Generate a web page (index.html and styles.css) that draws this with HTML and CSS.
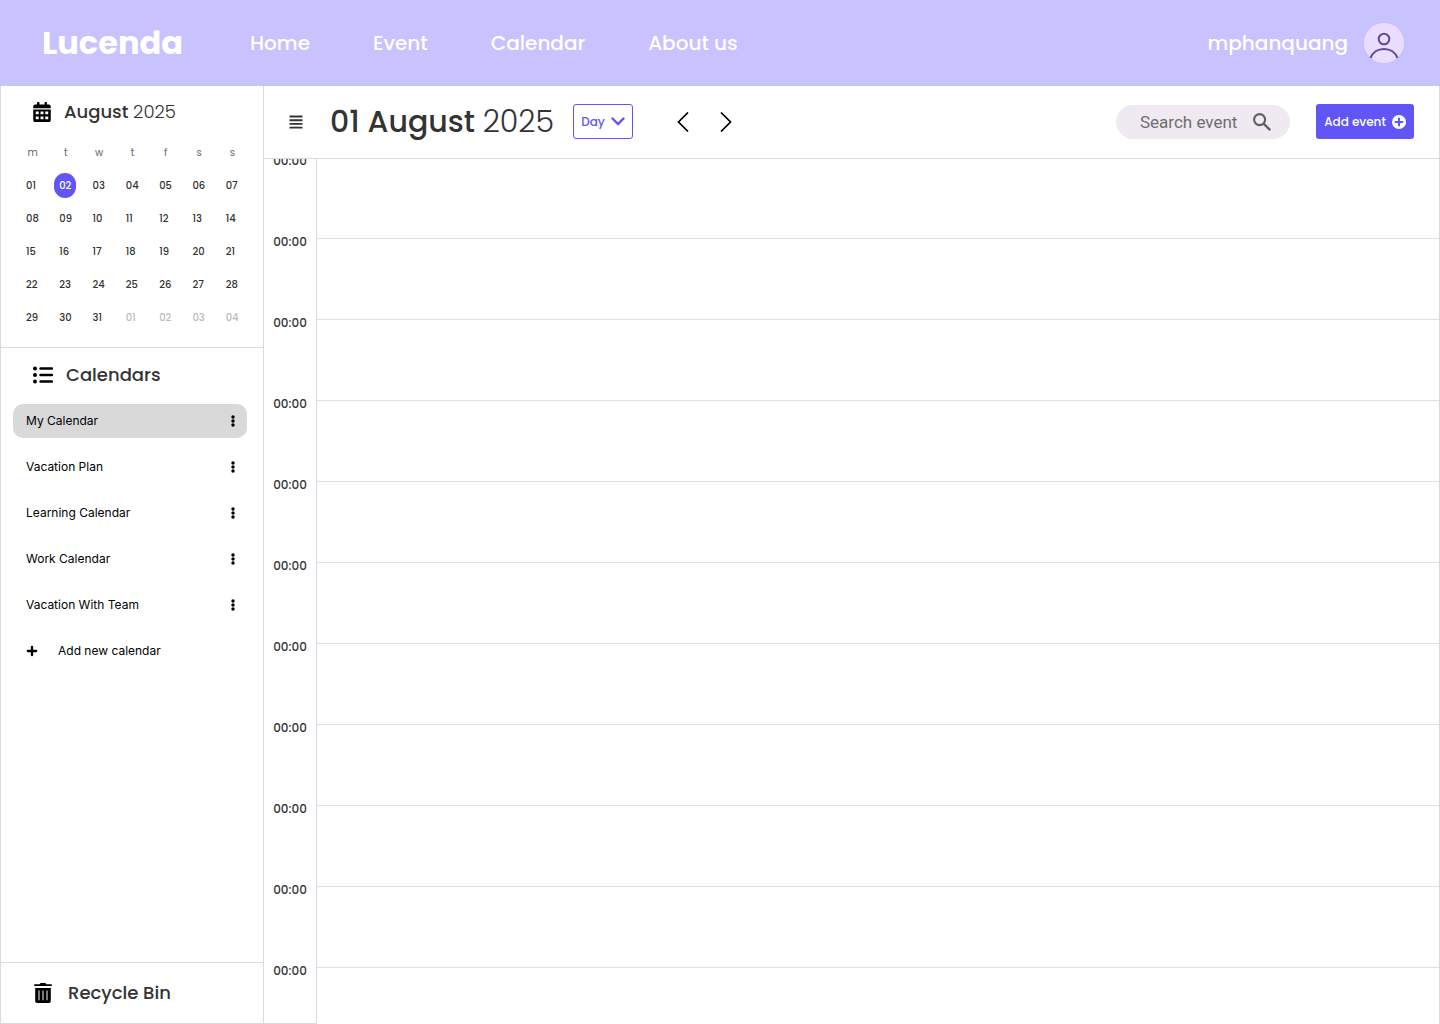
FILE: index.html
```html
<!DOCTYPE html>
<html lang="en">
<head>
<meta charset="utf-8">
<meta name="viewport" content="width=device-width, initial-scale=1">
<title>Lucenda</title>
<link rel="stylesheet" href="styles.css">
</head>
<body>
<header class="topbar">
  <a class="logo" href="#">Lucenda</a>
  <nav class="nav">
    <a href="#">Home</a>
    <a href="#">Event</a>
    <a href="#">Calendar</a>
    <a href="#">About us</a>
  </nav>
  <a class="user" href="#">
    <span>mphanquang</span>
    <svg width="40" height="40" viewBox="0 0 40 40" aria-hidden="true">
      <circle cx="20" cy="20" r="20" fill="#eaddff"/>
      <g fill="none" stroke="#5b4b96" stroke-width="2">
        <circle cx="20" cy="16" r="5.3"/>
        <path d="M6.600 35C8.500 29.500 13.700 26 20 26s11.500 3.500 13.400 9"/>
      </g>
    </svg>
  </a>
</header>
<div class="layout">
  <aside class="sidebar">
    <section class="month">
      <h2 class="side-title">
        <svg width="18" height="20" viewBox="0 0 448 512" aria-hidden="true"><path d="M0 192h448v272c0 26.500-21.500 48-48 48H48c-26.500 0-48-21.500-48-48zM400 64h-48V16c0-8.800-7.200-16-16-16h-32c-8.800 0-16 7.200-16 16v48H160V16c0-8.800-7.200-16-16-16h-32c-8.800 0-16 7.200-16 16v48H48C21.500 64 0 85.500 0 112v48h448v-48c0-26.500-21.500-48-48-48z"/><path fill="#fff" d="M64 244h76v70H64zm122 0h76v70h-76zm122 0h76v70h-76zM64 370h76v70H64zm122 0h76v70h-76zm122 0h76v70h-76z"/></svg>
        <span>August <span class="year">2025</span></span>
      </h2>
      <table class="days">
        <thead><tr><th>m</th><th>t</th><th>w</th><th>t</th><th>f</th><th>s</th><th>s</th></tr></thead>
        <tbody>
          <tr><td>01</td><td><span class="today">02</span></td><td>03</td><td>04</td><td>05</td><td>06</td><td>07</td></tr>
          <tr><td>08</td><td>09</td><td>10</td><td>11</td><td>12</td><td>13</td><td>14</td></tr>
          <tr><td>15</td><td>16</td><td>17</td><td>18</td><td>19</td><td>20</td><td>21</td></tr>
          <tr><td>22</td><td>23</td><td>24</td><td>25</td><td>26</td><td>27</td><td>28</td></tr>
          <tr><td>29</td><td>30</td><td>31</td><td class="next">01</td><td class="next">02</td><td class="next">03</td><td class="next">04</td></tr>
        </tbody>
      </table>
    </section>
    <section class="calendars">
      <h2 class="side-title">
        <svg width="20" height="18" viewBox="0 0 20 18" aria-hidden="true"><circle cx="2" cy="2.500" r="2"/><circle cx="2" cy="9" r="2"/><circle cx="2" cy="15.500" r="2"/><path d="M7.500 2.500h11.500M7.500 9h11.500M7.500 15.500h11.500" stroke="#000" stroke-width="2.500" stroke-linecap="round"/></svg>
        <span>Calendars</span>
      </h2>
      <ul class="cal-list">
        <li class="cal active"><a href="#">My Calendar</a><button type="button" aria-label="Options for My Calendar"><svg width="4" height="12" viewBox="0 0 4 12"><circle cx="2" cy="2" r="1.700"/><circle cx="2" cy="6" r="1.700"/><circle cx="2" cy="10" r="1.700"/></svg></button></li>
        <li class="cal"><a href="#">Vacation Plan</a><button type="button" aria-label="Options for Vacation Plan"><svg width="4" height="12" viewBox="0 0 4 12"><circle cx="2" cy="2" r="1.700"/><circle cx="2" cy="6" r="1.700"/><circle cx="2" cy="10" r="1.700"/></svg></button></li>
        <li class="cal"><a href="#">Learning Calendar</a><button type="button" aria-label="Options for Learning Calendar"><svg width="4" height="12" viewBox="0 0 4 12"><circle cx="2" cy="2" r="1.700"/><circle cx="2" cy="6" r="1.700"/><circle cx="2" cy="10" r="1.700"/></svg></button></li>
        <li class="cal"><a href="#">Work Calendar</a><button type="button" aria-label="Options for Work Calendar"><svg width="4" height="12" viewBox="0 0 4 12"><circle cx="2" cy="2" r="1.700"/><circle cx="2" cy="6" r="1.700"/><circle cx="2" cy="10" r="1.700"/></svg></button></li>
        <li class="cal"><a href="#">Vacation With Team</a><button type="button" aria-label="Options for Vacation With Team"><svg width="4" height="12" viewBox="0 0 4 12"><circle cx="2" cy="2" r="1.700"/><circle cx="2" cy="6" r="1.700"/><circle cx="2" cy="10" r="1.700"/></svg></button></li>
      </ul>
      <button type="button" class="add-calendar">
        <svg width="12" height="12" viewBox="0 0 12 12" aria-hidden="true"><path d="M6 1.800v8.400M1.800 6h8.400" stroke="#000" stroke-width="2.300" stroke-linecap="round"/></svg>
        Add new calendar
      </button>
    </section>
    <a class="side-title recycle" href="#">
      <svg width="18" height="20" viewBox="0 0 18 20" aria-hidden="true"><path d="M1 1.200h4.700L6.500 0h5l.8 1.200H17c.6 0 1 .4 1 .9s-.4 1-1 1H1c-.6 0-1-.4-1-1s.4-.9 1-.9zM1.200 5h15.600v13c0 1.200-.8 2-2 2H3.200c-1.200 0-2-.8-2-2z"/><path d="M5 7.500v9.800M9 7.500v9.800M13 7.500v9.800" stroke="#ddd" stroke-width="1.100"/></svg>
      <span>Recycle Bin</span>
    </a>
  </aside>
  <main class="main">
    <div class="toolbar">
      <button type="button" class="icon-btn" aria-label="Toggle sidebar"><svg width="14" height="14" viewBox="0 0 14 14"><path d="M.5 1.500h13M.5 5.200h13M.5 8.900h13M.5 12.600h13" stroke="#333" stroke-width="1.900"/></svg></button>
      <h1 class="date">01 August <span class="year">2025</span></h1>
      <button type="button" class="view">Day <svg width="14" height="9" viewBox="0 0 14 9" aria-hidden="true"><path d="M1.500 1.500 7 7l5.500-5.500" fill="none" stroke="#6155f5" stroke-width="2.400" stroke-linecap="round"/></svg></button>
      <div class="pager">
        <button type="button" class="icon-btn" aria-label="Previous day"><svg width="12" height="20" viewBox="0 0 12 20"><path d="M11 .5 1.500 10l9.500 9.500" fill="none" stroke="#000" stroke-width="1.700"/></svg></button>
        <button type="button" class="icon-btn" aria-label="Next day"><svg width="12" height="20" viewBox="0 0 12 20"><path d="M1 .5 10.500 10 1 19.500" fill="none" stroke="#000" stroke-width="1.700"/></svg></button>
      </div>
      <form class="search">
        <input type="search" placeholder="Search event" aria-label="Search event">
        <button type="submit" class="icon-btn" aria-label="Search"><svg width="18" height="18" viewBox="0 0 18 18"><circle cx="6.600" cy="6.600" r="5.500" fill="none" stroke="#605d64" stroke-width="2.100"/><path d="m10.600 10.600 6.600 6.600" stroke="#605d64" stroke-width="2.300"/></svg></button>
      </form>
      <button type="button" class="add-event">Add event <svg width="14" height="14" viewBox="0 0 14 14" aria-hidden="true"><circle cx="7" cy="7" r="7" fill="#fff"/><path d="M7 3.500v7M3.500 7h7" stroke="#6155f5" stroke-width="2" stroke-linecap="round"/></svg></button>
    </div>
    <div class="timeline">
      <ol class="hours">
        <li>00:00</li><li>00:00</li><li>00:00</li><li>00:00</li><li>00:00</li><li>00:00</li><li>00:00</li><li>00:00</li><li>00:00</li><li>00:00</li><li>00:00</li>
      </ol>
      <div class="slots">
        <div></div><div></div><div></div><div></div><div></div><div></div><div></div><div></div><div></div><div></div><div></div>
      </div>
    </div>
  </main>
</div>
</body>
</html>
```

FILE: styles.css
```css
* { box-sizing: border-box; }

body {
  margin: 0;
  height: 100vh;
  display: flex;
  flex-direction: column;
  background: #fff;
  color: #333;
  font-family: Poppins, Inter, sans-serif;
  font-weight: 500;
}

a { color: inherit; text-decoration: none; }
ul, ol { list-style: none; margin: 0; padding: 0; }
h1, h2 { margin: 0; font-weight: 500; }
svg { display: block; flex: none; }

button {
  border: 0;
  padding: 0;
  background: none;
  color: inherit;
  font: inherit;
  cursor: pointer;
}

.topbar {
  flex: none;
  height: 86px;
  padding: 0 36px 0 42px;
  display: flex;
  align-items: center;
  background: #c8c2ff;
  color: #fff;
  font-size: 20px;
}

.logo { width: 208px; font-size: 32px; font-weight: 700; }
.nav { display: flex; gap: 63px; }
.user { margin-left: auto; display: flex; align-items: center; gap: 16px; }

.layout { flex: 1; min-height: 0; display: flex; }

.sidebar {
  flex: none;
  width: 264px;
  display: flex;
  flex-direction: column;
  border: 1px solid #d9d9de;
  border-top: 0;
}

.side-title {
  display: flex;
  align-items: center;
  gap: 13px;
  padding-left: 32px;
  font-size: 18px;
  line-height: 28px;
}

.year { font-weight: 300; }

.month { padding: 12px 0 13px; border-bottom: 1px solid #d9d9de; }

.days {
  width: 233px;
  margin: 10px 0 0 21px;
  table-layout: fixed;
  border-collapse: collapse;
  font-size: 10px;
  line-height: 25px;
}

.days th, .days td { height: 33px; padding: 0 0 0 4px; text-align: left; }
.days th { padding: 0 12px 0 0; text-align: center; font-weight: 400; color: #666; }
.days .next { color: #bbb; }

.today {
  display: block;
  width: 22px;
  margin-left: -5px;
  border-radius: 11px;
  background: #6155f5;
  color: #fff;
  text-align: center;
}

.calendars { flex: 1; padding: 13px 16px 0 12px; }
.calendars .side-title { padding-left: 20px; }

.cal-list { display: grid; gap: 12px; margin-top: 15px; }

.cal, .add-calendar {
  height: 34px;
  padding: 0 12px 0 13px;
  display: flex;
  align-items: center;
  color: #000;
  font: 400 12px/16px Inter, sans-serif;
}

.cal { justify-content: space-between; border-radius: 10px; }
.cal.active { background: #d9d9d9; }
.add-calendar { gap: 20px; margin-top: 12px; }

.recycle { height: 61px; border-top: 1px solid #d9d9de; gap: 16px; padding-left: 33px; }

.main {
  flex: 1;
  min-width: 0;
  display: flex;
  flex-direction: column;
  border-right: 1px solid #d9d9de;
}

.toolbar {
  flex: none;
  height: 73px;
  padding: 0 25px 1px;
  display: flex;
  align-items: center;
  border-bottom: 1px solid #d9d9de;
}

.date { margin-left: 27px; width: 243px; font-size: 30px; white-space: nowrap; }

.view {
  width: 60px;
  height: 35px;
  display: flex;
  align-items: center;
  justify-content: center;
  gap: 6px;
  border: 1px solid #6155f5;
  border-radius: 3px;
  color: #6155f5;
  font-size: 12px;
}

.pager { display: flex; gap: 31px; margin-left: 44px; }

.search {
  width: 174px;
  height: 34px;
  margin-left: auto;
  padding: 0 19px 0 24px;
  display: flex;
  align-items: center;
  justify-content: space-between;
  border-radius: 17px;
  background: #efe9f1;
}

.search input {
  width: 106px;
  padding: 0;
  border: 0;
  outline: 0;
  appearance: none;
  background: none;
  color: #49454f;
  font: 400 17px/24px Roboto, sans-serif;
}

.search input::-webkit-search-cancel-button { display: none; }
.search input::placeholder { color: #706c74; }

.add-event {
  width: 98px;
  height: 35px;
  margin-left: 26px;
  display: flex;
  align-items: center;
  justify-content: center;
  gap: 6px;
  border-radius: 3px;
  background: #6155f5;
  color: #fff;
  font-size: 12px;
}

.timeline { flex: 1; min-height: 0; display: flex; overflow: hidden; }

.hours {
  flex: none;
  width: 53px;
  overflow: hidden;
  border: 1px solid #d9d9de;
  border-width: 0 1px 1px 0;
  font-size: 12px;
  line-height: 16px;
  text-align: center;
}

.hours li { height: 81px; }
.hours li:first-child { margin-top: -6px; }
.slots { flex: 1; overflow: hidden; }
.slots div { height: 81px; border-bottom: 1px solid #e0e0e0; }
.slots div:first-child { height: 80px; }
```
